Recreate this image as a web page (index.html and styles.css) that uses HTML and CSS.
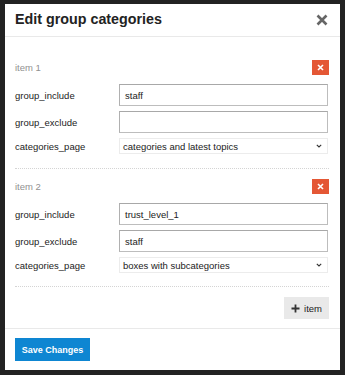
FILE: index.html
```html
<!DOCTYPE html>
<html>
<head>
<meta charset="utf-8">
<link rel="stylesheet" href="styles.css">
</head>
<body>
<div class="modal">
  <div class="modal-header">
    <h3 class="title">Edit group categories</h3>
    <span class="close"><svg width="12" height="12" viewBox="0 0 12 12"><path d="M1.5 1.5 L10.5 10.5 M10.5 1.5 L1.5 10.5" stroke="#666" stroke-width="2.6" stroke-linecap="butt"/></svg></span>
  </div>
  <div class="modal-body">
    <div class="item">
      <div class="item-head">
        <span class="item-name">item 1</span>
        <button class="remove"><svg width="7" height="7" viewBox="0 0 7 7"><path d="M1 1 L6 6 M6 1 L1 6" stroke="#fff" stroke-width="1.6"/></svg></button>
      </div>
      <div class="row"><label class="lbl">group_include</label><div class="input">staff</div></div>
      <div class="row"><label class="lbl">group_exclude</label><div class="input"></div></div>
      <div class="row"><label class="lbl">categories_page</label><div class="select"><span>categories and latest topics</span><svg width="6" height="4" viewBox="0 0 6 4"><path d="M0.8 0.8 L3 3 L5.2 0.8" stroke="#333" stroke-width="1.1" fill="none"/></svg></div></div>
    </div>
    <div class="item">
      <div class="item-head">
        <span class="item-name">item 2</span>
        <button class="remove"><svg width="7" height="7" viewBox="0 0 7 7"><path d="M1 1 L6 6 M6 1 L1 6" stroke="#fff" stroke-width="1.6"/></svg></button>
      </div>
      <div class="row"><label class="lbl">group_include</label><div class="input">trust_level_1</div></div>
      <div class="row"><label class="lbl">group_exclude</label><div class="input">staff</div></div>
      <div class="row"><label class="lbl">categories_page</label><div class="select"><span>boxes with subcategories</span><svg width="6" height="4" viewBox="0 0 6 4"><path d="M0.8 0.8 L3 3 L5.2 0.8" stroke="#333" stroke-width="1.1" fill="none"/></svg></div></div>
    </div>
    <div class="add-row">
      <button class="add"><svg width="9" height="9" viewBox="0 0 9 9"><path d="M4.5 0.5 V8.5 M0.5 4.5 H8.5" stroke="#333" stroke-width="1.8"/></svg><span>item</span></button>
    </div>
  </div>
  <div class="modal-footer">
    <button class="save">Save Changes</button>
  </div>
</div>
</body>
</html>
```
FILE: styles.css
```css
html, body {
  margin: 0;
  padding: 0;
}
body {
  background: #222;
  width: 345px;
  height: 375px;
  overflow: hidden;
  font-family: "Liberation Sans", Arial, sans-serif;
  padding: 4px 5px 5px 5px;
  box-sizing: border-box;
}
.modal {
  background: #fff;
  width: 335px;
  height: 366px;
  display: flex;
  flex-direction: column;
}
.modal-header {
  height: 34px;
  border-bottom: 1px solid #e9e9e9;
  display: flex;
  align-items: center;
  justify-content: space-between;
  padding: 0 12px 0 10px;
}
.title {
  margin: 0;
  font-size: 14.3px;
  font-weight: bold;
  color: #222;
  position: relative;
  top: -1px;
}
.close {
  display: flex;
  width: 12px;
  height: 12px;
  position: relative;
  top: 0px;
}
.modal-body {
  padding: 23px 11px 9px 10px;
  flex: 1;
}
.item {
  display: flex;
  flex-direction: column;
  gap: 5px;
  padding: 0 0 14px 0;
  border-bottom: 1px dotted #d4d4d4;
}
.item + .item {
  padding-top: 10px;
  padding-bottom: 13px;
}
.item-head {
  display: flex;
  justify-content: space-between;
  align-items: center;
  height: 15px;
  margin-bottom: 4px;
}
.item-name {
  font-size: 9.5px;
  color: #919191;
}
.remove {
  width: 17px;
  height: 15px;
  border: none;
  background: #e45735;
  padding: 0;
  display: flex;
  align-items: center;
  justify-content: center;
}
.row {
  display: flex;
  align-items: center;
}
.lbl {
  width: 104px;
  font-size: 9.5px;
  color: #222;
}
.input {
  box-sizing: border-box;
  width: 209px;
  height: 22px;
  border: 1px solid #bdbdbd;
  border-top-color: #a8a8a8;
  border-left-color: #b0b0b0;
  font-size: 9.5px;
  color: #222;
  padding: 0 5px;
  display: flex;
  align-items: center;
}
.select {
  box-sizing: border-box;
  width: 209px;
  height: 16px;
  border: 1px solid #ececec;
  font-size: 9.5px;
  color: #222;
  padding: 0 5px 0 3px;
  display: flex;
  align-items: center;
  justify-content: space-between;
}
.add-row {
  display: flex;
  justify-content: flex-end;
  padding-top: 10px;
  padding-right: 0;
}
.add {
  width: 45px;
  height: 22px;
  border: none;
  background: #e9e9e9;
  padding: 0;
  display: flex;
  align-items: center;
  justify-content: center;
  gap: 4px;
  font-family: "Liberation Sans", Arial, sans-serif;
  font-size: 9.5px;
  color: #222;
}
.modal-footer {
  border-top: 1px solid #e9e9e9;
  padding: 9px 10px 9px 10px;
}
.save {
  width: 75px;
  height: 23px;
  border: none;
  background: #0e86d2;
  color: #fff;
  font-family: "Liberation Sans", Arial, sans-serif;
  font-weight: bold;
  font-size: 9px;
  padding: 0;
}
```
